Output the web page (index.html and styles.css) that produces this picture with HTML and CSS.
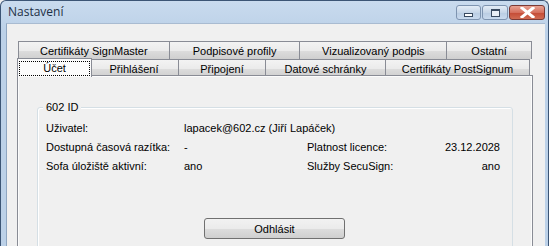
FILE: index.html
```html
<!DOCTYPE html>
<html>
<head>
<meta charset="utf-8">
<link rel="stylesheet" href="styles.css">
</head>
<body>
<div class="window">
  <div class="titlebar">
    <span class="title">Nastavení</span>
    <div class="caption-btns">
      <div class="cbtn min"><span class="min-glyph"></span></div>
      <div class="cbtn max"><span class="max-glyph"></span></div>
      <div class="cbtn close">
        <svg width="15" height="11" viewBox="0 0 15 11"><path d="M2 1 L13 10 M13 1 L2 10" stroke="#fff" stroke-width="3" stroke-linecap="square"/></svg>
      </div>
    </div>
  </div>
  <div class="client">
    <div class="tabctl">
      <div class="tabrow back">
        <div class="tab t1">Certifikáty SignMaster</div>
        <div class="tab t2">Podpisové profily</div>
        <div class="tab t3">Vizualizovaný podpis</div>
        <div class="tab t4">Ostatní</div>
      </div>
      <div class="tabrow front">
        <div class="tab sel t5"><span class="focus">Účet</span></div>
        <div class="tab t6">Přihlášení</div>
        <div class="tab t7">Připojení</div>
        <div class="tab t8">Datové schránky</div>
        <div class="tab t9">Certifikáty PostSignum</div>
      </div>
      <div class="panel">
        <div class="group">
          <div class="legend">602 ID</div>
          <div class="grid">
            <div class="lbl">Uživatel:</div>
            <div class="val span3">lapacek@602.cz (Jiří Lapáček)</div>
            <div class="lbl">Dostupná časová razítka:</div>
            <div class="val">-</div>
            <div class="lbl">Platnost licence:</div>
            <div class="val right">23.12.2028</div>
            <div class="lbl">Sofa úložiště aktivní:</div>
            <div class="val">ano</div>
            <div class="lbl">Služby SecuSign:</div>
            <div class="val right">ano</div>
          </div>
          <div class="btnrow"><button class="btn">Odhlásit</button></div>
        </div>
      </div>
    </div>
  </div>
</div>
</body>
</html>
```

FILE: styles.css
```css
html, body {
  margin: 0;
  padding: 0;
  background: #f0f0f0;
  width: 549px;
  height: 246px;
  overflow: hidden;
}

.window {
  box-sizing: border-box;
  width: 549px;
  height: 246px;
  overflow: hidden;
  border: 1px solid #3c5575;
  border-bottom: none;
  border-radius: 6px 6px 0 0;
  background: linear-gradient(#c9dbee, #bcd1e8 30px);
  padding: 0 3px 0 5px;
  display: flex;
  flex-direction: column;
  font-family: "Liberation Sans", Arial, sans-serif;
  font-size: 11px;
  color: #000;
}

.titlebar {
  height: 22px;
  flex: none;
  display: flex;
  align-items: flex-start;
  justify-content: space-between;
}

.title {
  font-family: "Open Sans", "Liberation Sans", sans-serif;
  font-size: 12px;
  color: #1e2f45;
  padding: 3px 0 0 2px;
  line-height: 16px;
}

.caption-btns {
  display: flex;
  gap: 1px;
  margin-top: 4px;
}

.cbtn {
  box-sizing: border-box;
  height: 15px;
  border: 1px solid #7e94b0;
  border-radius: 3px;
  background: linear-gradient(#e3ecf6, #c6d6e8 50%, #b9cce2 51%, #c9daee);
  display: flex;
  align-items: center;
  justify-content: center;
}

.cbtn.min { width: 25px; }
.cbtn.max { width: 26px; }
.cbtn.close {
  width: 36px;
  border-color: #7a3a36;
  background: linear-gradient(#e8a293, #d56f5d 50%, #c44a35 51%, #d06a52);
}

.min-glyph {
  box-sizing: border-box;
  width: 9px;
  height: 4px;
  margin-top: 4px;
  border: 1px solid #394a60;
  background: #fff;
}

.max-glyph {
  box-sizing: border-box;
  width: 9px;
  height: 8px;
  border: 1px solid #394a60;
  border-top-width: 2px;
  background: #e9eff6;
}

.client {
  flex: 1;
  background: #f0f0f0;
  border-left: 1px solid #8fa6c1;
  border-top: 1px solid #a9bbd1;
  padding: 16px 0 0 10px;
}

.tabctl {
  width: 516px;
  display: flex;
  flex-direction: column;
}

.tabrow {
  display: flex;
  height: 18px;
}

.tabrow.back { padding: 0 1px 0 1px; }
.tabrow.front { padding: 0 1px 0 0; }

.tab {
  box-sizing: border-box;
  height: 18px;
  margin-top: 1px;
  border: 1px solid #898c95;
  border-bottom: none;
  margin-left: -1px;
  background: linear-gradient(#f3f3f3, #ebebeb 50%, #dddddd 51%, #cfcfcf);
  display: flex;
  align-items: center;
  justify-content: center;
  white-space: nowrap;
}

.tabrow.back .tab:first-child { margin-left: 0; }

.tab.sel {
  height: 19px;
  margin-top: 0;
  background: #fcfcfc;
  position: relative;
  z-index: 1;
  margin-left: 0;
  margin-right: -2px;
  border-color: #898c95;
}

.focus {
  box-sizing: border-box;
  display: flex;
  align-items: center;
  justify-content: center;
  width: 71px;
  height: 15px;
  outline: 1px dotted #000;
  outline-offset: -1px;
}

.t1 { width: 152px; }
.t2 { width: 132px; }
.t3 { width: 148px; }
.t4 { width: 86px; }
.t5 { width: 75px; }
.t6 { width: 90px; }
.t7 { width: 88px; }
.t8 { width: 121px; }
.t9 { width: 145px; }

.panel {
  box-sizing: border-box;
  border: 1px solid #898c95;
  background: #f0f0f0;
  height: 200px;
  margin-top: -1px;
  padding: 31px 19px 0 19px;
  box-shadow: inset 1px 1px 0 #fcfcfc, inset -1px 0 0 #fcfcfc;
}

.group {
  position: relative;
  box-sizing: border-box;
  border: 1px solid #d5dfe5;
  border-radius: 3px;
  box-shadow: inset 1px 1px 0 #fff;
  height: 160px;
  padding: 13px 12px 0 8px;
}

.legend {
  position: absolute;
  top: -8px;
  left: 5px;
  padding: 0 3px;
  background: #f0f0f0;
  line-height: 14px;
}

.grid {
  display: grid;
  grid-template-columns: 138px 123px 1fr auto;
  row-gap: 5px;
  line-height: 14px;
}

.span3 { grid-column: 2 / 5; }
.right { text-align: right; }

.btnrow {
  display: flex;
  padding: 45px 0 0 158px;
}

.btn {
  box-sizing: border-box;
  width: 141px;
  height: 21px;
  border: 1px solid #707070;
  border-radius: 3px;
  background: linear-gradient(#f2f2f2, #ebebeb 50%, #dddddd 51%, #cfcfcf);
  font-family: "Liberation Sans", Arial, sans-serif;
  font-size: 11px;
  color: #000;
  padding: 0;
}
```
